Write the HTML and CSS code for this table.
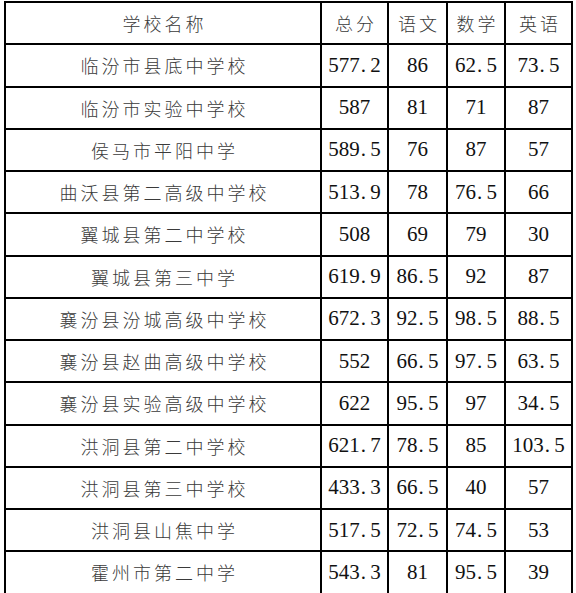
FILE: index.html
```html
<!DOCTYPE html>
<html lang="zh">
<head>
<meta charset="utf-8">
<title>成绩表</title>
<link rel="stylesheet" href="styles.css">
</head>
<body>
<table class="scores">
  <colgroup>
    <col class="c-name"><col class="c-num"><col class="c-sub"><col class="c-sub2"><col class="c-num">
  </colgroup>
  <thead>
    <tr><th class="zh">学校名称</th><th class="zh">总分</th><th class="zh">语文</th><th class="zh">数学</th><th class="zh">英语</th></tr>
  </thead>
  <tbody>
    <tr><td class="zh">临汾市县底中学校</td><td>577<span class="dot">.</span>2</td><td>86</td><td>62<span class="dot">.</span>5</td><td>73<span class="dot">.</span>5</td></tr>
    <tr><td class="zh">临汾市实验中学校</td><td>587</td><td>81</td><td>71</td><td>87</td></tr>
    <tr><td class="zh">侯马市平阳中学</td><td>589<span class="dot">.</span>5</td><td>76</td><td>87</td><td>57</td></tr>
    <tr><td class="zh">曲沃县第二高级中学校</td><td>513<span class="dot">.</span>9</td><td>78</td><td>76<span class="dot">.</span>5</td><td>66</td></tr>
    <tr><td class="zh">翼城县第二中学校</td><td>508</td><td>69</td><td>79</td><td>30</td></tr>
    <tr><td class="zh">翼城县第三中学</td><td>619<span class="dot">.</span>9</td><td>86<span class="dot">.</span>5</td><td>92</td><td>87</td></tr>
    <tr><td class="zh">襄汾县汾城高级中学校</td><td>672<span class="dot">.</span>3</td><td>92<span class="dot">.</span>5</td><td>98<span class="dot">.</span>5</td><td>88<span class="dot">.</span>5</td></tr>
    <tr><td class="zh">襄汾县赵曲高级中学校</td><td>552</td><td>66<span class="dot">.</span>5</td><td>97<span class="dot">.</span>5</td><td>63<span class="dot">.</span>5</td></tr>
    <tr><td class="zh">襄汾县实验高级中学校</td><td>622</td><td>95<span class="dot">.</span>5</td><td>97</td><td>34<span class="dot">.</span>5</td></tr>
    <tr><td class="zh">洪洞县第二中学校</td><td>621<span class="dot">.</span>7</td><td>78<span class="dot">.</span>5</td><td>85</td><td>103<span class="dot">.</span>5</td></tr>
    <tr><td class="zh">洪洞县第三中学校</td><td>433<span class="dot">.</span>3</td><td>66<span class="dot">.</span>5</td><td>40</td><td>57</td></tr>
    <tr><td class="zh">洪洞县山焦中学</td><td>517<span class="dot">.</span>5</td><td>72<span class="dot">.</span>5</td><td>74<span class="dot">.</span>5</td><td>53</td></tr>
    <tr><td class="zh">霍州市第二中学</td><td>543<span class="dot">.</span>3</td><td>81</td><td>95<span class="dot">.</span>5</td><td>39</td></tr>
  </tbody>
</table>
</body>
</html>
```

FILE: styles.css
```css
html, body {
  margin: 0;
  padding: 0;
  background: #ffffff;
}

body {
  padding: 1px 0 0 4px;
  overflow: hidden;
}

.scores {
  border-collapse: separate;
  border-spacing: 0;
  table-layout: fixed;
  width: 569px;
  border-left: 2px solid #000;
  border-top: 2px solid #000;
}

.c-name { width: 316px; }
.c-num { width: 67px; }
.c-sub { width: 59px; }
.c-sub2 { width: 58px; }

.scores th,
.scores td {
  box-sizing: border-box;
  height: 42.25px;
  padding: 0;
  border-right: 2px solid #000;
  border-bottom: 2px solid #000;
  text-align: center;
  vertical-align: middle;
  font-family: "Liberation Serif", "Times New Roman", serif;
  font-size: 21px;
  font-weight: normal;
  color: #111;
  white-space: nowrap;
  line-height: 1;
}

.scores .zh {
  font-family: "Noto Sans CJK SC", "Noto Sans", sans-serif;
  font-size: 18px;
  font-weight: 300;
  letter-spacing: 3px;
  padding-left: 3px;
  color: #3a3a3a;
}

.dot {
  display: inline-block;
  width: 0.5em;
  text-align: left;
  padding-left: 1px;
  box-sizing: border-box;
}
```
